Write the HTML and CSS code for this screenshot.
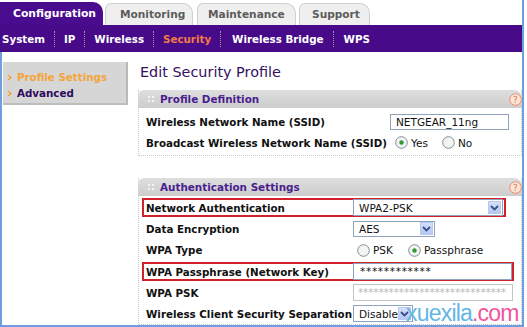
FILE: index.html
```html
<!DOCTYPE html>
<html>
<head>
<meta charset="utf-8">
<link rel="stylesheet" href="styles.css">
</head>
<body>
<div class="page">
  <div class="tabs">
    <div class="tab tab-active">Configuration</div>
    <div class="tab">Monitoring</div>
    <div class="tab">Maintenance</div>
    <div class="tab">Support</div>
  </div>
  <nav class="subnav">
    <span class="nav-item first">System</span><span class="sep"></span>
    <span class="nav-item">IP</span><span class="sep"></span>
    <span class="nav-item">Wireless</span><span class="sep"></span>
    <span class="nav-item current">Security</span><span class="sep"></span>
    <span class="nav-item">Wireless Bridge</span><span class="sep"></span>
    <span class="nav-item">WPS</span>
  </nav>
  <div class="content">
    <aside class="sidebar">
      <div class="side-item side-active"><svg class="chev" width="5" height="7" viewBox="0 0 5 7"><path d="M1 1 L4 3.5 L1 6" fill="none" stroke="#f0a030" stroke-width="1.3"/></svg>Profile Settings</div>
      <div class="side-item"><svg class="chev" width="5" height="7" viewBox="0 0 5 7"><path d="M1 1 L4 3.5 L1 6" fill="none" stroke="#f0a030" stroke-width="1.3"/></svg>Advanced</div>
    </aside>
    <main class="main">
      <h1 class="title">Edit Security Profile</h1>

      <section class="box">
        <div class="box-head">
          <svg class="grip" width="6" height="6" viewBox="0 0 6 6"><rect x="0" y="0" width="2" height="2" fill="#f4f4f4"/><rect x="4" y="0" width="2" height="2" fill="#f4f4f4"/><rect x="0" y="4" width="2" height="2" fill="#f4f4f4"/><rect x="4" y="4" width="2" height="2" fill="#f4f4f4"/></svg>
          <span class="head-text">Profile Definition</span>
          <svg class="help" width="13" height="13" viewBox="0 0 13 13"><circle cx="6.5" cy="6.5" r="5.8" fill="#fbe4d8" stroke="#f08a6a" stroke-width="1"/><text x="6.5" y="10" text-anchor="middle" font-family="DejaVu Sans, sans-serif" font-size="9" fill="#e8704a">?</text></svg>
        </div>
        <div class="rows rows-profile">
          <div class="row"><span class="lbl lbl-wide">Wireless Network Name (SSID)</span><span class="text-input ssid">NETGEAR_11ng</span></div>
          <div class="row"><span class="lbl lbl-wide">Broadcast Wireless Network Name (SSID)</span>
            <span class="radio-group yesno">
              <span class="radio"><svg width="13" height="13" viewBox="0 0 13 13"><circle cx="6.5" cy="6.5" r="5.8" fill="#f4f4f0" stroke="#7d8d9c" stroke-width="1"/><circle cx="6.5" cy="6.5" r="2.2" fill="#2f9a35"/></svg>Yes</span>
              <span class="radio"><svg width="13" height="13" viewBox="0 0 13 13"><circle cx="6.5" cy="6.5" r="5.8" fill="#f4f4f0" stroke="#7d8d9c" stroke-width="1"/></svg>No</span>
            </span>
          </div>
        </div>
      </section>

      <section class="box box-auth">
        <div class="box-head">
          <svg class="grip" width="6" height="6" viewBox="0 0 6 6"><rect x="0" y="0" width="2" height="2" fill="#f4f4f4"/><rect x="4" y="0" width="2" height="2" fill="#f4f4f4"/><rect x="0" y="4" width="2" height="2" fill="#f4f4f4"/><rect x="4" y="4" width="2" height="2" fill="#f4f4f4"/></svg>
          <span class="head-text">Authentication Settings</span>
          <svg class="help" width="13" height="13" viewBox="0 0 13 13"><circle cx="6.5" cy="6.5" r="5.8" fill="#fbe4d8" stroke="#f08a6a" stroke-width="1"/><text x="6.5" y="10" text-anchor="middle" font-family="DejaVu Sans, sans-serif" font-size="9" fill="#e8704a">?</text></svg>
        </div>
        <div class="rows rows-auth">
          <div class="row hl hl-auth"><span class="lbl">Network Authentication</span>
            <span class="select sel-auth"><span class="sel-text">WPA2-PSK</span><span class="sel-btn"><svg width="9" height="6" viewBox="0 0 9 6"><path d="M1 1 L4.5 4.5 L8 1" fill="none" stroke="#3b4f86" stroke-width="1.8"/></svg></span></span>
          </div>
          <div class="row"><span class="lbl">Data Encryption</span>
            <span class="select sel-aes"><span class="sel-text">AES</span><span class="sel-btn"><svg width="9" height="6" viewBox="0 0 9 6"><path d="M1 1 L4.5 4.5 L8 1" fill="none" stroke="#3b4f86" stroke-width="1.8"/></svg></span></span>
          </div>
          <div class="row row-tall"><span class="lbl">WPA Type</span>
            <span class="radio-group psk">
              <span class="radio"><svg width="13" height="13" viewBox="0 0 13 13"><circle cx="6.5" cy="6.5" r="5.8" fill="#f4f4f0" stroke="#7d8d9c" stroke-width="1"/></svg>PSK</span>
              <span class="radio"><svg width="13" height="13" viewBox="0 0 13 13"><circle cx="6.5" cy="6.5" r="5.8" fill="#f4f4f0" stroke="#7d8d9c" stroke-width="1"/><circle cx="6.5" cy="6.5" r="2.2" fill="#2f9a35"/></svg>Passphrase</span>
            </span>
          </div>
          <div class="row hl hl-pass"><span class="lbl">WPA Passphrase (Network Key)</span>
            <span class="text-input pass">************</span>
          </div>
          <div class="row"><span class="lbl">WPA PSK</span>
            <span class="text-input psk-input">*****************************</span>
          </div>
          <div class="row"><span class="lbl">Wireless Client Security Separation</span>
            <span class="select sel-dis"><span class="sel-text">Disable</span><span class="sel-btn"><svg width="9" height="6" viewBox="0 0 9 6"><path d="M1 1 L4.5 4.5 L8 1" fill="none" stroke="#3b4f86" stroke-width="1.8"/></svg></span></span>
          </div>
        </div>
      </section>
    </main>
  </div>
  <div class="watermark">xuexila<span class="wm-com">.com</span></div>
</div>
</body>
</html>
```
FILE: styles.css
```css
html, body {
  margin: 0;
  padding: 0;
  background: #ffffff;
}
body {
  width: 527px;
  height: 327px;
  overflow: hidden;
  font-family: "DejaVu Sans", Verdana, sans-serif;
}
.page {
  position: relative;
  width: 522px;
  height: 327px;
  border-right: 2px solid #6d9ee0;
  display: flex;
  flex-direction: column;
}
.tabs {
  height: 25px;
  flex: none;
  display: flex;
  align-items: flex-end;
  gap: 2px;
}
.tab {
  box-sizing: border-box;
  height: 22px;
  padding: 0 0 0 14px;
  background: #efefef;
  border: 1px solid #cfcfcf;
  border-bottom: none;
  border-radius: 6px 10px 0 0;
  color: #5c5c5c;
  font-weight: bold;
  font-size: 10.6px;
  line-height: 21px;
}
.tab:nth-child(2) { width: 88px; }
.tab:nth-child(3) { width: 99px; margin-left: 2px; padding-left: 10px; }
.tab:nth-child(4) { width: 71px; margin-left: 1px; padding-left: 12px; }
.tab-active {
  width: 103px;
  height: 23px;
  background: #4a0c8e;
  border: none;
  border-radius: 0 10px 0 0;
  color: #ffffff;
  padding: 0 0 0 13px;
  line-height: 23px;
  font-size: 10.8px;
}
.subnav {
  height: 27px;
  flex: none;
  background: #470b8a;
  display: flex;
  align-items: center;
}
.nav-item {
  color: #ffffff;
  font-weight: bold;
  font-size: 10.3px;
  padding: 0 9px;
}
.nav-item.first { padding-left: 2px; }
.nav-item.current { color: #f27a46; }
.nav-item:nth-last-child(3) { padding-left: 11px; }
.nav-item:last-child { padding-left: 10px; }
.sep {
  width: 0;
  height: 16px;
  border-left: 1px dotted #a89a88;
}
.content {
  flex: 1;
  min-height: 0;
  display: flex;
  align-items: flex-start;
  border-left: 2px solid #6d9ee0;
  border-bottom: 2px solid #6d9ee0;
  overflow: hidden;
}
.sidebar {
  width: 125px;
  height: 43px;
  flex: none;
  margin: 10px 0 0 1px;
  box-sizing: border-box;
  padding-top: 7px;
  background: #d6d6d6;
  border-right: 2px solid #b9b9b9;
  border-bottom: 2px solid #bdbdbd;
}
.side-item {
  display: flex;
  align-items: center;
  height: 16px;
  font-weight: bold;
  font-size: 10.3px;
  color: #2c0a5c;
}
.side-item.side-active { color: #f3a53a; }
.chev {
  margin: 0 5px 0 4px;
}
.main {
  margin-left: 10px;
  width: 384px;
  flex: none;
}
.title {
  margin: 10px 0 0 2px;
  height: 20px;
  font-size: 14.4px;
  line-height: 20px;
  font-weight: normal;
  color: #341060;
}
.box {
  margin-top: 8px;
  border: 1px dotted #c9c9c9;
  border-top: none;
}
.box-auth {
  margin-top: 22px;
}
.box-head {
  box-sizing: border-box;
  height: 18px;
  margin: 0 -1px;
  display: flex;
  align-items: center;
  background: linear-gradient(#dedede, #cdcdcd);
  border-radius: 6px 8px 0 0;
  padding-left: 10px;
}
.grip {
  margin-right: 6px;
}
.head-text {
  flex: 1;
  font-weight: bold;
  font-size: 10.4px;
  color: #4a1e8e;
}
.help {
  margin-right: 0;
}
.rows-profile {
  padding: 3px 0 2px;
}
.rows-auth {
  padding-top: 1px;
}
.row {
  height: 21px;
  display: flex;
  align-items: center;
  padding-left: 7px;
  box-sizing: border-box;
}
.row-tall { height: 22px; }
.lbl {
  width: 207px;
  flex: none;
  font-weight: bold;
  font-size: 10.3px;
  color: #111111;
  white-space: nowrap;
}
.lbl-wide { width: 244px; }
.hl {
  height: 19px;
  margin: 1px 0 1px 3px;
  padding-left: 2px;
  border: 2px solid #d3202a;
}
.hl-auth { width: 364px; }
.hl-pass { width: 372px; }
.text-input {
  box-sizing: border-box;
  height: 16px;
  border: 1px solid #8ea4bd;
  background: #ffffff;
  font-size: 10.5px;
  line-height: 14px;
  padding-left: 5px;
  color: #111;
  white-space: nowrap;
  overflow: hidden;
}
.ssid { width: 119px; }
.pass { width: 159px; height: 17px; padding-left: 6px; letter-spacing: 0.7px; }
.psk-input {
  width: 160px;
  height: 17px;
  border-color: #c0c4c8;
  color: #b9b9b9;
  padding-left: 4px;
  letter-spacing: -0.15px;
}
.radio-group {
  display: flex;
  font-size: 10.5px;
  color: #111;
}
.radio {
  display: flex;
  align-items: center;
}
.radio svg { margin-right: 3px; }
.yesno { margin-left: 5px; }
.yesno .radio:first-child { width: 47px; }
.psk { margin-left: 4px; }
.psk .radio:first-child { width: 51px; }
.select {
  box-sizing: border-box;
  height: 17px;
  display: flex;
  align-items: center;
  border: 1px solid #8ea4bd;
  background: #ffffff;
  font-size: 10.5px;
  color: #111;
}
.sel-text {
  flex: 1;
  padding-left: 5px;
}
.sel-btn {
  width: 13px;
  height: 13px;
  margin-right: 1px;
  background: linear-gradient(#d4e0fb, #b5c7f2);
  border: 1px solid #b8c8ee;
  box-sizing: border-box;
  display: flex;
  align-items: center;
  justify-content: center;
}
.sel-auth { width: 150px; }
.sel-aes { width: 82px; height: 16px; }
.sel-dis { width: 60px; }
.watermark {
  position: absolute;
  left: 406px;
  top: 300px;
  font-family: "Liberation Sans", Arial, sans-serif;
  font-size: 23px;
  line-height: 26px;
  letter-spacing: -0.8px;
  color: #63b6e4;
  z-index: 2;
}
.wm-com { color: #f2559d; }
```
